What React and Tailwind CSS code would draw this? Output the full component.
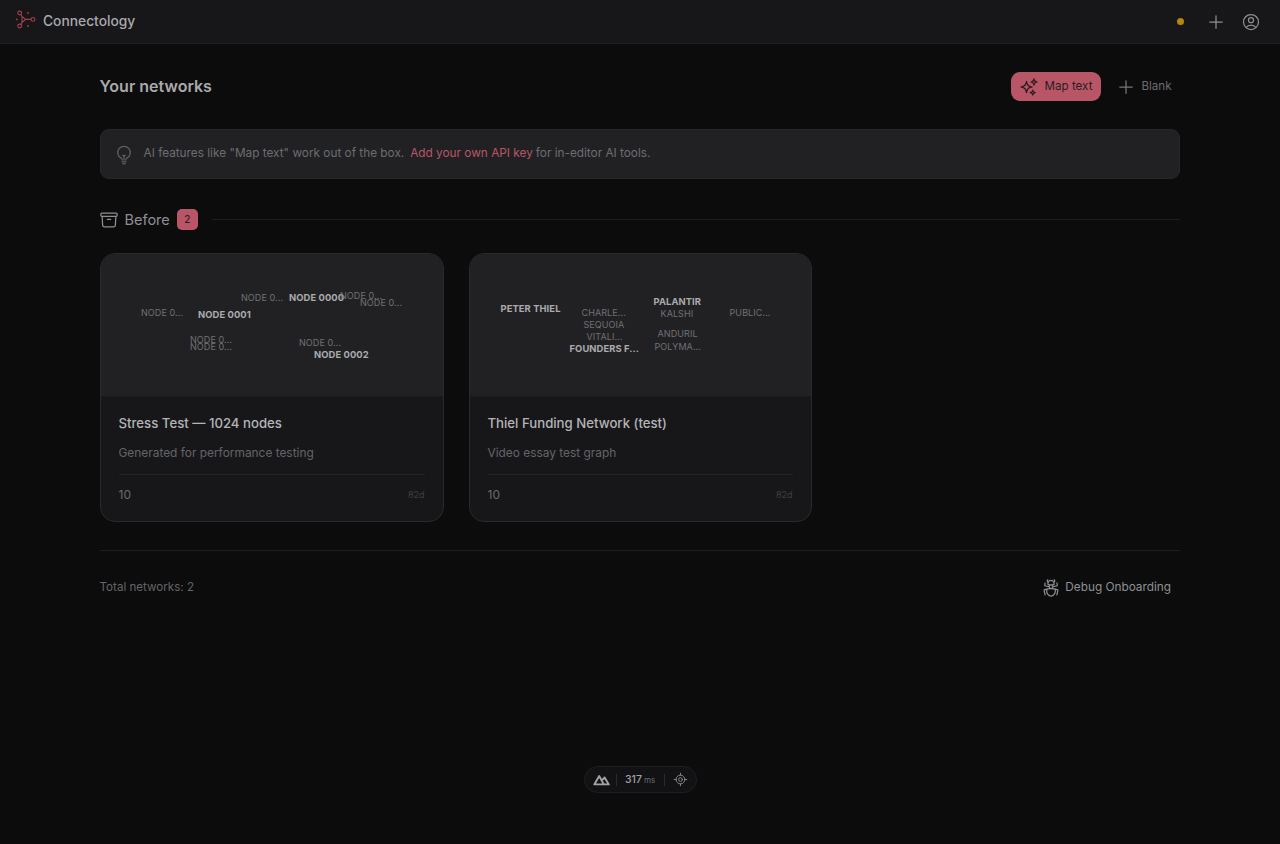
import React from "react";
import { LocateFixed } from "lucide-react";
import {
  HiOutlinePlus,
  HiOutlineUserCircle,
  HiOutlineLightBulb,
  HiOutlineArchiveBox,
  HiOutlineSparkles,
  HiOutlineBugAnt,
} from "react-icons/hi2";

const Logo = () => (
  <svg width="20" height="20" viewBox="0 0 20 20" fill="none" stroke="#a0414e" strokeWidth="1.1" className="overflow-visible">
    <circle cx="3.7" cy="2" r="1.9" />
    <circle cx="3.7" cy="15" r="1.9" />
    <circle cx="17" cy="8.4" r="1.9" />
    <path d="M4.8 3.6 L6 5.3 L6 11.5 L4.8 13.4 M6 5.3 L9.6 8.4 L6 11.5 Z M9.6 8.4 H15" />
    <circle cx="12" cy="2" r="0.9" fill="#a0414e" stroke="none" />
    <circle cx="12" cy="15" r="0.9" fill="#a0414e" stroke="none" />
    <circle cx="0.8" cy="8.4" r="0.9" fill="#a0414e" stroke="none" />
  </svg>
);

const Nuxt = () => (
  <svg width="17" height="12" viewBox="0 0 17 12" fill="none" stroke="#a3a3a3" strokeWidth="1.9" strokeLinejoin="round">
    <path d="M1.3 10.4L6.2 2L10.8 10.4Z" />
    <path d="M9.2 6.2L11.6 3.4L15.8 10.4H10.8" />
  </svg>
);

const Label = ({ x, y, bold, children }) => (
  <span
    className={bold
      ? "absolute whitespace-nowrap text-[9.4px] leading-none tracking-[0.01em] font-bold text-[#ababad]"
      : "absolute whitespace-nowrap text-[9px] leading-none tracking-[0.01em] text-[#707073]"}
    style={{ left: x, top: y }}
  >
    {children}
  </span>
);

const Card = ({ title, desc, nodes }) => (
  <div className="h-[269px] flex flex-col rounded-[15px] border border-[#2a2a2d] bg-[#17171a] overflow-hidden">
    <div className="relative h-[143px] shrink-0 bg-[#212124] border-b border-[#1c1c1f]">
      {nodes.map((n, i) => (
        <Label key={i} x={n[0]} y={n[1]} bold={n[3]}>{n[2]}</Label>
      ))}
    </div>
    <div className="flex-1 px-[18px] pt-[16px] flex flex-col">
      <div className="text-[13.2px] leading-5 font-medium text-[#b4b4b6]">{title}</div>
      <div className="mt-[10px] text-[11.9px] leading-5 text-[#646467]">{desc}</div>
      <div className="mt-[11px] border-t border-[#242427] pt-[10px] flex items-center justify-between">
        <span className="text-xs leading-5 text-[#6b6b6e]">10</span>
        <span className="text-[9px] leading-5 text-[#3f3f42]">82d</span>
      </div>
    </div>
  </div>
);

const nodesA = [
  [140.5, 39, "NODE 0...", false],
  [188.5, 39, "NODE 0000", true],
  [239.5, 37, "NODE 0...", false],
  [259.5, 44, "NODE 0...", false],
  [40.5, 54, "NODE 0...", false],
  [97.5, 56, "NODE 0001", true],
  [89.5, 81, "NODE 0...", false],
  [89.5, 88, "NODE 0...", false],
  [198.5, 84, "NODE 0...", false],
  [213.5, 96, "NODE 0002", true],
];

const nodesB = [
  [31, 50, "PETER THIEL", true],
  [112, 54, "CHARLE...", false],
  [114, 66, "SEQUOIA", false],
  [117, 78, "VITALI...", false],
  [100, 90, "FOUNDERS F...", true],
  [184, 43, "PALANTIR", true],
  [191, 55, "KALSHI", false],
  [188, 75, "ANDURIL", false],
  [185, 88, "POLYMA...", false],
  [260, 54, "PUBLIC...", false],
];

export default function App() {
  return (
    <div className="relative min-h-[844px] bg-[#0c0c0d] font-['Inter',sans-serif] overflow-hidden">
      <header className="h-[44px] bg-[#17171a] border-b border-[#1f1f22] flex items-center justify-between pl-[16px] pr-[19px]">
        <div className="flex items-center gap-[7px] pb-[1px]">
          <Logo />
          <span className="text-[13.8px] font-medium text-[#a9a9ab]">Connectology</span>
        </div>
        <div className="flex items-center">
          <span className="w-[7px] h-[7px] rounded-full bg-[#b8860b]" />
          <HiOutlinePlus className="ml-[22px] text-[#8f8f92]" size={20} />
          <HiOutlineUserCircle className="ml-[15px] text-[#8f8f92]" size={20} />
        </div>
      </header>

      <main className="w-[1080px] ml-[99.5px]">
        <div className="mt-[28px] h-[29px] flex items-center justify-between">
          <h1 className="pb-[1px] text-base font-semibold text-[#a9a9ab]">Your networks</h1>
          <div className="flex items-center gap-[8px]">
            <button className="h-[29px] w-[90px] rounded-[9px] bg-[#b85667] flex items-center justify-center gap-[6px] text-[11.6px] font-normal text-[#2e1b1f]">
              <HiOutlineSparkles size={20} />
              Map text
            </button>
            <button className="h-[29px] w-[71px] flex items-center justify-center gap-[5px] text-[11.6px] font-normal text-[#6b6b6e]">
              <HiOutlinePlus size={20} className="text-[#77777a]" />
              Blank
            </button>
          </div>
        </div>

        <div className="mt-[28px] h-[50px] rounded-[9px] bg-[#212124] border border-[#28282b] flex items-center pb-[1px] pl-[13px] text-[11.8px] text-[#6d6d70]">
          <HiOutlineLightBulb size={20} className="text-[#5e5e61] mt-[2px]" />
          <span className="ml-[10px]">{'AI features like "Map text" work out of the box.'}</span>
          <span className="ml-[6px] font-normal text-[#b85667]">Add your own API key</span>
          <span className="ml-[3px]">for in-editor AI tools.</span>
        </div>

        <div className="mt-[30px] h-[21px] flex items-center">
          <HiOutlineArchiveBox size={20} className="text-[#8f8f92] -ml-[1px]" />
          <span className="ml-[6px] text-[14.5px] font-normal text-[#8f8f92]">Before</span>
          <span className="ml-[7px] w-[21px] h-[21px] rounded-[5px] bg-[#b85667] flex items-center justify-center text-[10px] font-medium text-[#35191e]">2</span>
          <div className="ml-[14px] flex-1 border-t border-[#1d1d20]" />
        </div>

        <div className="mt-[23px] grid gap-[25px] w-[712px] grid-cols-[344px_343px]">
          <Card title="Stress Test — 1024 nodes" desc="Generated for performance testing" nodes={nodesA} />
          <Card title="Thiel Funding Network (test)" desc="Video essay test graph" nodes={nodesB} />
        </div>

        <div className="mt-[28px] border-t border-[#1d1d20] pt-[18px] h-[56px] flex items-center justify-between">
          <span className="text-[11.6px] text-[#646467]">Total networks: 2</span>
          <span className="flex items-center gap-[4px] pr-[8.5px] text-[11.8px] font-normal text-[#8f8f92]">
            <HiOutlineBugAnt size={20} />
            Debug Onboarding
          </span>
        </div>
      </main>

      <div className="absolute left-[584px] top-[766px] w-[113px] h-[27px] rounded-full bg-[#121214] border border-[#1f1f22] flex items-center pl-[8px]">
        <Nuxt />
        <span className="ml-[6px] h-[12px] border-l border-[#2a2a2d]" />
        <span className="ml-[8px] text-[10.5px] font-medium text-[#a3a3a3]">317</span>
        <span className="ml-[2px] text-[8px] text-[#6b6b6e]">ms</span>
        <span className="ml-[9px] h-[12px] border-l border-[#2a2a2d]" />
        <LocateFixed size={15} strokeWidth={1.5} className="ml-[8px] text-[#8a8a8d]" />
      </div>
    </div>
  );
}
